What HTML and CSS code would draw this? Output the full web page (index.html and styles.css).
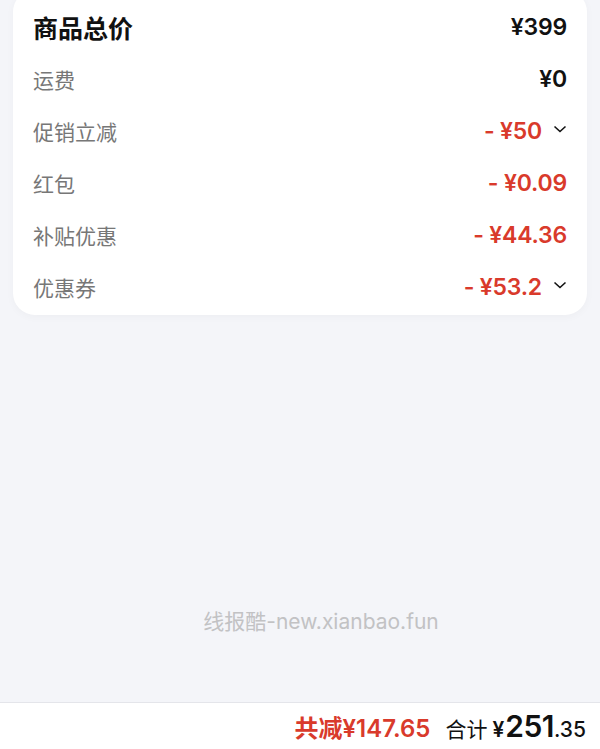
FILE: index.html
```html
<!DOCTYPE html>
<html lang="zh-CN">
<head>
    <meta charset="UTF-8">
    <meta name="viewport" content="width=device-width, initial-scale=1.0">
    <title>订单金额</title>
    <link rel="stylesheet" href="styles.css">
</head>
<body>
    <div class="page">
        <div class="card">
            <div class="row row-total">
                <span class="label">商品总价</span>
                <span class="value">¥399</span>
            </div>
            <div class="row">
                <span class="label">运费</span>
                <span class="value">¥0</span>
            </div>
            <div class="row">
                <span class="label">促销立减</span>
                <span class="value red">- ¥50</span>
                <svg class="chevron" viewBox="0 0 14 8"><path d="M1.5 1.5 L7 6.5 L12.5 1.5" /></svg>
            </div>
            <div class="row">
                <span class="label">红包</span>
                <span class="value red">- ¥0.09</span>
            </div>
            <div class="row">
                <span class="label">补贴优惠</span>
                <span class="value red">- ¥44.36</span>
            </div>
            <div class="row">
                <span class="label">优惠券</span>
                <span class="value red">- ¥53.2</span>
                <svg class="chevron" viewBox="0 0 14 8"><path d="M1.5 1.5 L7 6.5 L12.5 1.5" /></svg>
            </div>
        </div>

        <div class="watermark">线报酷-new.xianbao.fun</div>
    </div>

    <div class="footer">
        <span class="saved">共减¥147.65</span>
        <span class="sum-label">合计</span>
        <span class="sum-yen">¥</span><span class="sum-int">251</span><span class="sum-dec">.35</span>
    </div>
</body>
</html>
```

FILE: styles.css
```css
body {
    margin: 0;
    height: 749px;
    overflow: hidden;
    display: flex;
    flex-direction: column;
    background-color: #f4f5f9;
    font-family: Inter, "Noto Sans CJK SC", sans-serif;
}
.page {
    flex: 1;
    display: flex;
    flex-direction: column;
}
.card {
    margin: -10px 13px 0 13px;
    padding: 11px 20px 2px 20px;
    background-color: #fff;
    border-radius: 22px;
    box-shadow: 0 2px 8px rgba(0,0,0,0.03);
}
.row {
    height: 52px;
    display: flex;
    align-items: center;
}
.label {
    flex: 1;
    font-size: 21px;
    color: #777;
    font-family: "Noto Sans CJK SC", sans-serif;
}
.row-total .label {
    font-size: 25px;
    font-weight: 700;
    color: #111;
}
.value {
    font-size: 23px;
    font-weight: 600;
    color: #111;
    letter-spacing: -0.2px;
}
.red {
    color: #d93a2b;
}
.chevron {
    width: 14px;
    height: 8px;
    margin: 0 0 4px 11px;
    fill: none;
    stroke: #111;
    stroke-width: 1.6;
}
.watermark {
    margin-top: auto;
    margin-bottom: 67px;
    padding-left: 42px;
    text-align: center;
    font-size: 21px;
    color: #c2c2c4;
}
.footer {
    height: 46px;
    border-top: 1px solid #e4e5ea;
    background-color: #fff;
    display: flex;
    justify-content: flex-end;
    align-items: baseline;
    padding: 0 14px 0 0;
    line-height: 46px;
}
.saved {
    font-size: 24px;
    font-weight: 600;
    color: #d93a2b;
    margin-right: 15px;
}
.sum-label {
    font-size: 21px;
    color: #111;
    font-family: "Noto Sans CJK SC", sans-serif;
    margin-right: 5px;
}
.sum-yen {
    font-size: 21px;
    font-weight: 600;
    color: #111;
    margin-right: 1px;
}
.sum-int {
    font-size: 30px;
    font-weight: 600;
    color: #111;
    letter-spacing: -0.5px;
}
.sum-dec {
    font-size: 21px;
    font-weight: 500;
    color: #111;
}
```
